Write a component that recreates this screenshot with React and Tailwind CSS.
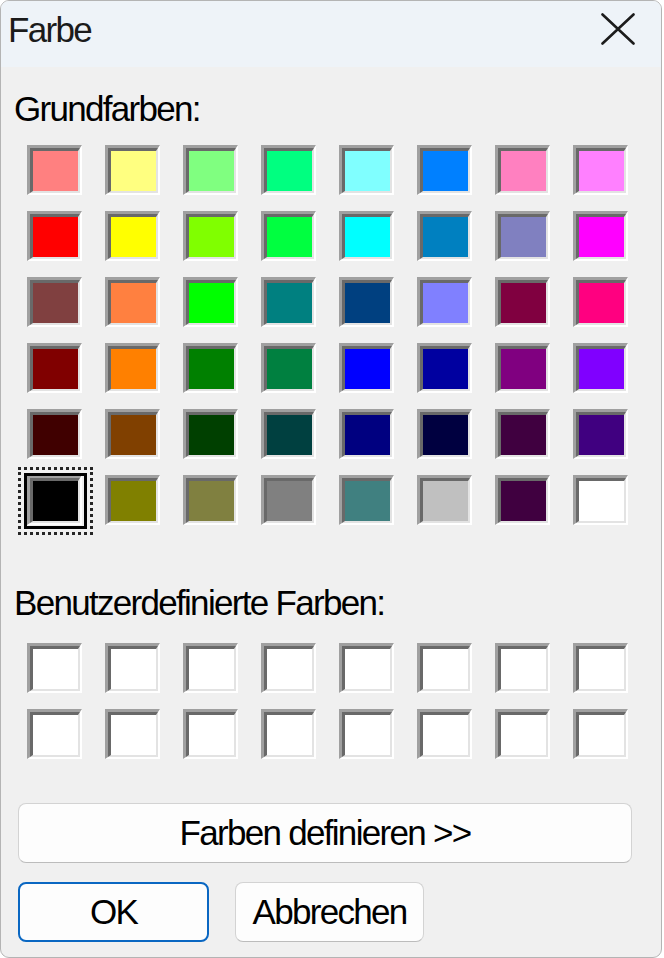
import React from "react";

// Default palette of the Windows colour picker, row by row
const basicColors = [
  ["bg-[#ff8080]", "bg-[#ffff80]", "bg-[#80ff80]", "bg-[#00ff80]", "bg-[#80ffff]", "bg-[#0080ff]", "bg-[#ff80c0]", "bg-[#ff80ff]"],
  ["bg-[#ff0000]", "bg-[#ffff00]", "bg-[#80ff00]", "bg-[#00ff40]", "bg-[#00ffff]", "bg-[#0080c0]", "bg-[#8080c0]", "bg-[#ff00ff]"],
  ["bg-[#804040]", "bg-[#ff8040]", "bg-[#00ff00]", "bg-[#008080]", "bg-[#004080]", "bg-[#8080ff]", "bg-[#800040]", "bg-[#ff0080]"],
  ["bg-[#800000]", "bg-[#ff8000]", "bg-[#008000]", "bg-[#008040]", "bg-[#0000ff]", "bg-[#0000a0]", "bg-[#800080]", "bg-[#8000ff]"],
  ["bg-[#400000]", "bg-[#804000]", "bg-[#004000]", "bg-[#004040]", "bg-[#000080]", "bg-[#000040]", "bg-[#400040]", "bg-[#400080]"],
  ["bg-[#000000]", "bg-[#808000]", "bg-[#808040]", "bg-[#808080]", "bg-[#408080]", "bg-[#c0c0c0]", "bg-[#400040]", "bg-[#ffffff]"],
];

function Swatch({ fill, selected }) {
  return (
    <div className="relative w-[55px] h-[50px]">
      {/* sunken 3D frame */}
      <div className="w-full h-full border-t-[3px] border-l-[3px] border-b-[2px] border-r-[2px] border-t-[#a0a0a0] border-l-[#a0a0a0] border-b-white border-r-white">
        <div
          className={`w-full h-full border-t-[3px] border-l-[3px] border-b-[2px] border-r-[2px] border-t-[#696969] border-l-[#696969] border-b-[#e3e3e3] border-r-[#e3e3e3] ${fill}`}
        />
      </div>
      {selected && (
        <>
          <div className="absolute -left-[3px] -top-[2px] w-[63px] h-[56px] border-[3px] border-black" />
          <div className="absolute -left-[9px] -top-[8px] w-[75px] h-[68px] border-[3px] border-dotted border-[#262626]" />
        </>
      )}
    </div>
  );
}

function CloseIcon() {
  return (
    <svg width="34" height="32" viewBox="0 0 34 32" fill="none">
      <path d="M1.5 1.5 L32.5 30.5 M32.5 1.5 L1.5 30.5" stroke="#1c1c1c" strokeWidth="2.6" strokeLinecap="round" />
    </svg>
  );
}

export default function App() {
  return (
    <div className="w-[664px] h-[958px] bg-white font-['Liberation_Sans',Arial,sans-serif] text-[35px] leading-[40px] tracking-[-1.7px] text-black">
      <div className="w-[662px] h-[958px] rounded-[9px] border border-[#b4b4b4] overflow-hidden bg-[#f0f0f0] flex flex-col">
        {/* Title bar */}
        <div className="h-[66px] bg-[#eef3f8] flex items-start justify-between pl-[7px] pr-[26px]">
          <span className="mt-[9px] text-[#1b1b1b]">Farbe</span>
          <div className="mt-[12px]">
            <CloseIcon />
          </div>
        </div>

        <div className="flex flex-col pl-[13px]">
          <div className="mt-[22px]">Grundfarben:</div>

          <div className="mt-[16px] ml-[13px] grid grid-cols-[repeat(8,55px)] gap-x-[23px] gap-y-[16px]">
            {basicColors.map((row, r) =>
              row.map((fill, c) => (
                <Swatch key={`${r}-${c}`} fill={fill} selected={r === 5 && c === 0} />
              ))
            )}
          </div>

          <div className="mt-[58px]">Benutzerdefinierte Farben:</div>

          <div className="mt-[20px] ml-[13px] grid grid-cols-[repeat(8,55px)] gap-x-[23px] gap-y-[16px]">
            {Array.from({ length: 16 }).map((_, i) => (
              <Swatch key={i} fill="bg-white" />
            ))}
          </div>

          {/* Buttons */}
          <button className="mt-[44px] ml-[4px] w-[614px] h-[60px] rounded-[8px] bg-[#fdfdfd] border border-[#d3d3d3] border-b-[#bcbcbc] flex items-center justify-center">
            Farben definieren &gt;&gt;
          </button>

          <div className="mt-[19px] ml-[4px] flex gap-[26px]">
            <button className="w-[191px] h-[60px] rounded-[8px] bg-[#fdfdfd] border-2 border-[#0a67c2] flex items-center justify-center">
              OK
            </button>
            <button className="w-[189px] h-[60px] rounded-[8px] bg-[#fdfdfd] border border-[#d3d3d3] border-b-[#bcbcbc] flex items-center justify-center">
              Abbrechen
            </button>
          </div>
        </div>
      </div>
    </div>
  );
}
